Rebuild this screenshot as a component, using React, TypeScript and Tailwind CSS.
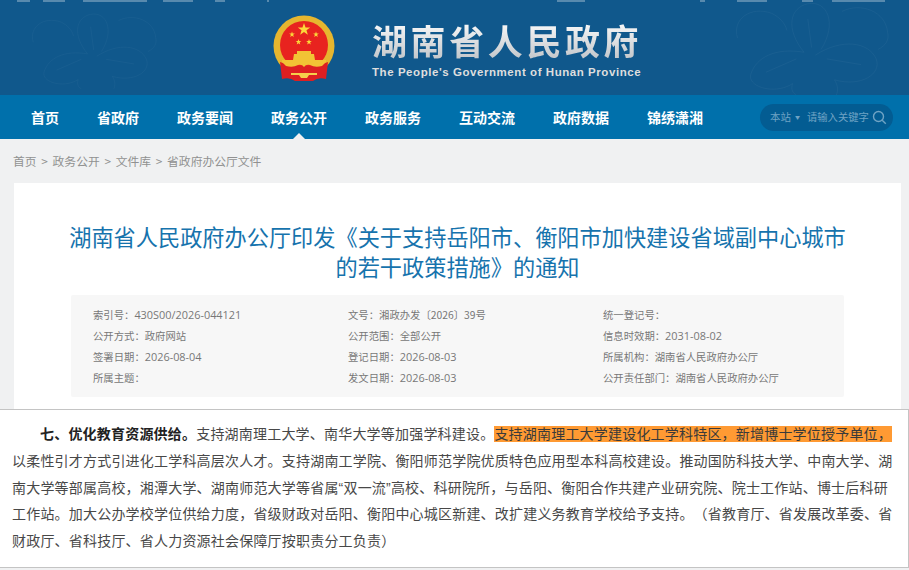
const NAV = ["首页", "省政府", "政务要闻", "政务公开", "政务服务", "互动交流", "政府数据", "锦绣潇湘"];

const META = [
	["索引号：", "430S00/2026-044121"],
	["文号：", "湘政办发〔2026〕39号"],
	["统一登记号：", ""],
	["公开方式：", "政府网站"],
	["公开范围：", "全部公开"],
	["信息时效期：", "2031-08-02"],
	["签署日期：", "2026-08-04"],
	["登记日期：", "2026-08-03"],
	["所属机构：", "湖南省人民政府办公厅"],
	["所属主题：", ""],
	["发文日期：", "2026-08-03"],
	["公开责任部门：", "湖南省人民政府办公厅"],
];

const Star = ({ x, y, r }: { x: number; y: number; r: number }) => {
	const pts = Array.from({ length: 10 }, (_, i) => {
		const a = (Math.PI / 5) * i - Math.PI / 2;
		const d = i % 2 === 0 ? r : r * 0.4;
		return `${x + d * Math.cos(a)},${y + d * Math.sin(a)}`;
	}).join(" ");
	return <polygon points={pts} fill="#fcd83a" />;
};

const Emblem = () => (
	<svg width="62" height="68" viewBox="0 0 62 68" className="shrink-0">
		<circle cx="31" cy="31" r="30.5" fill="#e6b62f" />
		<circle cx="31" cy="30" r="24" fill="#e8231f" />
		<path d="M7 47 L19 51 L43 51 L55 47 L53 64 Q45 62 40 66 L22 66 Q17 62 9 64 Z" fill="#dd1f22" />
		<Star x={31} y={14.5} r={6.5} />
		<Star x={19} y={19.5} r={3} />
		<Star x={43} y={19.5} r={3} />
		<Star x={25.5} y={27} r={3} />
		<Star x={36} y={27} r={3} />
		<path d="M24 36 L38 36 L38 39 L41 39 L42 45 L20 45 L21 39 L24 39 Z" fill="#f2c335" />
		<path d="M9 45 L53 45 L53 47 L49 51 Q42 53 37 50 Q33 49 31 52 Q29 49 25 50 Q20 53 13 51 L9 47 Z" fill="#f2c335" />
		<path d="M18 58 L44 58 L44 60 L36 60 L34 63 L28 63 L26 60 L18 60 Z" fill="#f5cf4b" />
	</svg>
);

// 页头两侧的淡色花纹
const Flower = ({ className }: { className: string }) => (
	<svg viewBox="0 0 200 100" fill="none" stroke="#ffffff" strokeOpacity="0.045" strokeWidth="1" className={className}>
		<path d="M100 55 C80 30 85 8 104 4 C125 0 135 25 118 52" />
		<path d="M100 55 C70 50 50 60 44 78 C40 92 70 100 88 88" />
		<path d="M112 58 C140 40 168 44 176 62 C182 78 160 92 132 84" />
		<path d="M30 40 C24 20 44 6 66 14 C74 18 80 24 82 32" />
		<path d="M140 12 C160 2 186 12 188 34 C190 42 186 48 178 52" />
		<path d="M88 88 C86 94 88 98 92 100 M132 84 C136 90 136 96 134 100" />
		<path d="M104 20 L108 50 M92 62 L60 76 M124 62 L160 68" />
	</svg>
);

export default function App() {
	return (
		<div className="h-[570px] w-[909px] overflow-hidden bg-[#f0f1f2] font-['Noto_Sans_CJK_SC','Liberation_Sans',sans-serif] [text-spacing-trim:space-all]">
			{/* 页头 */}
			<header className="relative flex h-[95px] items-start overflow-hidden bg-[#10588c]">
				<Flower className="absolute left-[10px] top-[5px] h-[90px] w-[155px]" />
				<Flower className="absolute right-[0px] top-0 h-[95px] w-[210px]" />
				{/* 顶栏被截掉后只剩一点笔画 */}
				<div aria-hidden className="absolute inset-x-0 top-0 flex h-[2px]">
					<span className="ml-[17px] w-[13px] bg-white/30" />
					<span className="ml-[13px] w-[22px] bg-white/30" />
					<span className="ml-[18px] w-[64px] bg-white/30" />
					<span className="ml-[16px] w-[30px] bg-white/30" />
					<span className="ml-[22px] w-[10px] bg-white/30" />
					<span className="ml-[42px] w-[2px] bg-white/30" />
					<span className="ml-[288px] w-[28px] bg-white/30" />
					<span className="ml-[115px] w-[5px] bg-white/30" />
					<span className="ml-[32px] w-[30px] bg-white/30" />
					<span className="ml-[35px] w-[11px] bg-white/30" />
					<span className="ml-[19px] w-[53px] bg-white/30" />
				</div>
				<div className="relative ml-[273px] mt-[15px] flex items-start">
					<Emblem />
					<div className="ml-[37px] mt-[3px]">
						<div className="whitespace-nowrap bg-gradient-to-b from-white to-[#bfc3c7] bg-clip-text text-[35px] font-bold leading-[44px] tracking-[3.6px] text-transparent">
							湖南省人民政府
						</div>
						<div className="mt-[2px] whitespace-nowrap font-['Liberation_Sans',sans-serif] text-[11.5px] font-bold leading-[16px] tracking-[0.56px] text-[#dedede]">
							The People's Government of Hunan Province
						</div>
					</div>
				</div>
			</header>

			{/* 导航 */}
			<nav className="flex h-[44px] items-center bg-[#0070ab] pl-[31px] pr-[16px]">
				<ul className="flex items-center gap-[38px] text-[14px] font-bold leading-[44px] text-white">
					{NAV.map((item) => (
						<li key={item} className="relative">
							{item}
							{item === "政务公开" && (
								<span className="absolute bottom-0 left-1/2 -ml-[6px] border-x-[6px] border-b-[6px] border-x-transparent border-b-[#f0f1f2]" />
							)}
						</li>
					))}
				</ul>
				<div className="ml-auto flex h-[27px] w-[133px] items-center rounded-full bg-[#035c92] pl-[10px] pr-[6px] text-[#6fa3c4]">
					<span className="text-[10.5px]">本站</span>
					<span className="ml-[4px] text-[5px]">▼</span>
					<span className="ml-[7px] whitespace-nowrap text-[10.3px]">请输入关键字</span>
					<svg width="15" height="15" viewBox="0 0 15 15" fill="none" stroke="currentColor" strokeWidth="1.4" className="ml-auto">
						<circle cx="6.5" cy="6.5" r="5" />
						<path d="M10.2 10.2 L13.8 13.8" />
					</svg>
				</div>
			</nav>

			{/* 面包屑 */}
			<div className="flex h-[44px] items-center gap-[4.7px] pl-[13px] text-[11.8px] text-[#919191]">
				<span>首页</span>
				<span>&gt;</span>
				<span>政务公开</span>
				<span>&gt;</span>
				<span>文件库</span>
				<span>&gt;</span>
				<span>省政府办公厅文件</span>
			</div>

			{/* 正文卡片 */}
			<main className="ml-[14px] h-[226px] w-[887px] overflow-hidden bg-white px-[57px] pt-[38px]">
				<h1 className="-mx-[20px] whitespace-nowrap text-center text-[22.2px] font-normal leading-[30px] text-[#1673ad]">
					湖南省人民政府办公厅印发《关于支持岳阳市、衡阳市加快建设省域副中心城市
					<br />
					的若干政策措施》的通知
				</h1>
				<div className="mt-[14px] grid h-[102px] grid-cols-[255px_255px_1fr] content-center rounded-[2px] bg-[#f7f7f7] pl-[22px] pt-[2px] text-[10.35px] leading-[20.8px] text-[#777]">
					{META.map(([label, value]) => (
						<div key={label} className="whitespace-nowrap">
							{label}
							{/^\d|^430/.test(value) && !value.includes("号") ? (
								<span className="font-['Open_Sans',sans-serif] text-[10.9px]">{value}</span>
							) : (
								value
							)}
						</div>
					))}
				</div>
			</main>

			{/* 截取的段落 */}
			<section className="h-[159px] w-[909px] border border-l-0 border-[#c4c4c4] bg-white pl-[12px] pr-[14px] pt-[11px] font-['Liberation_Sans','Noto_Sans_CJK_SC',sans-serif] text-[14px] leading-[26.8px] tracking-[0.2px] text-[#484848]">
				<p className="indent-[28px]">
					<b className="font-bold text-[#222]">七、优化教育资源供给。</b>
					支持湖南理工大学、南华大学等加强学科建设。
					<span className="bg-[#ff9a33] text-[#3a3a3a]">支持湖南理工大学建设化工学科特区，新增博士学位授予单位，</span>
					以柔性引才方式引进化工学科高层次人才。支持湖南工学院、衡阳师范学院优质特色应用型本科高校建设。推动国防科技大学、中南大学、湖南大学等部属高校，湘潭大学、湖南师范大学等省属“双一流”高校、科研院所，与岳阳、衡阳合作共建产业研究院、院士工作站、博士后科研工作站。加大公办学校学位供给力度，省级财政对岳阳、衡阳中心城区新建、改扩建义务教育学校给予支持。（省教育厅、省发展改革委、省财政厅、省科技厅、省人力资源社会保障厅按职责分工负责）
				</p>
			</section>
		</div>
	);
}
